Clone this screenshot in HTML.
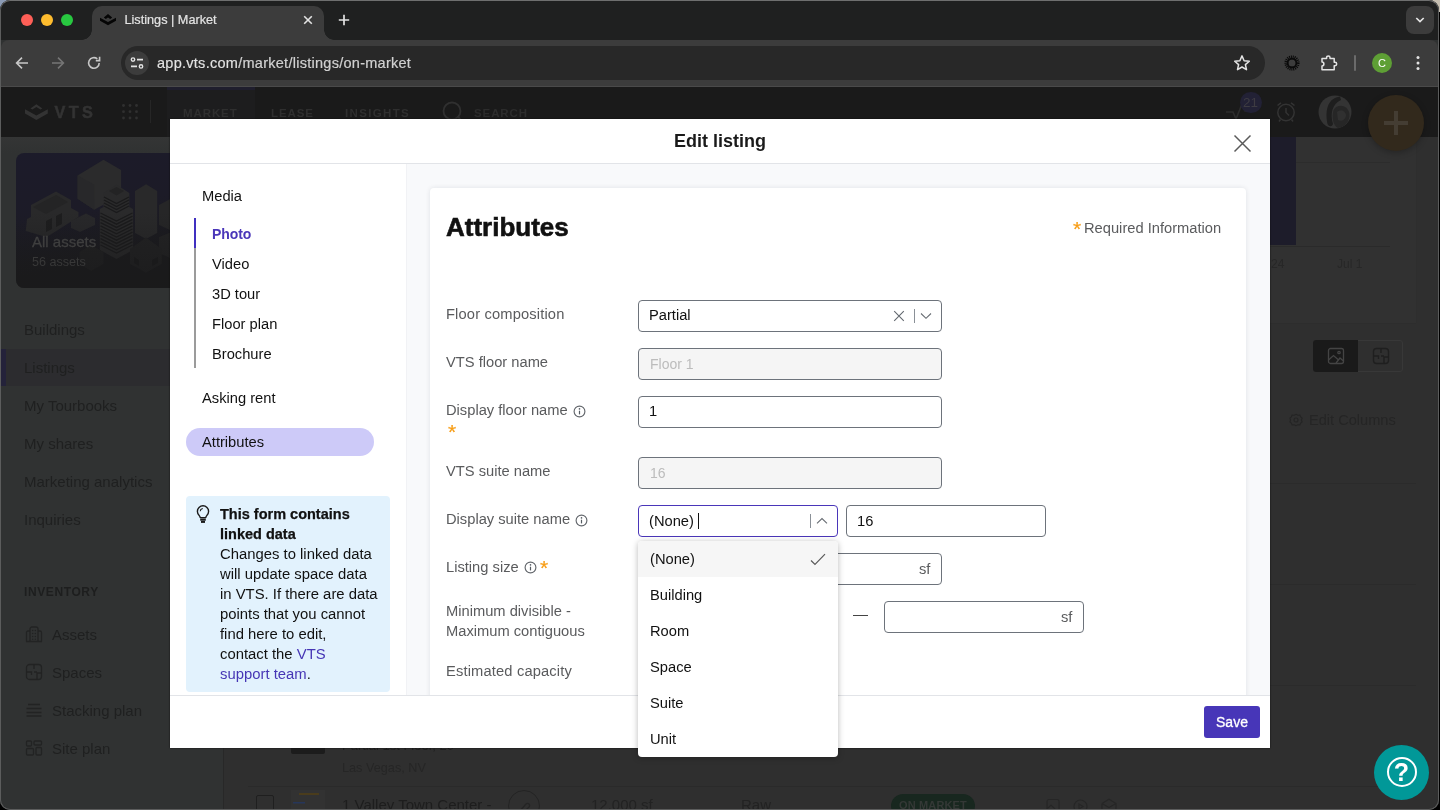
<!DOCTYPE html>
<html lang="en">
<head>
<meta charset="utf-8">
<title>Listings | Market</title>
<style>
*{box-sizing:border-box;margin:0;padding:0}
html,body{width:1440px;height:810px;overflow:hidden;background:#000}
body{font-family:"Liberation Sans",sans-serif;position:relative;color:#111}
.abs{position:absolute}
#win{will-change:transform;position:absolute;left:0;top:0;width:1439px;height:810px;border-radius:10px;overflow:hidden;background:#2f3131}
#winborder{position:absolute;left:0;top:0;width:1439px;height:810px;border-radius:10px;border:1px solid #5c5d5d;border-top-color:#6e6f6f;z-index:100;pointer-events:none}
/* ---------- browser chrome ---------- */
#tabbar{position:absolute;left:0;top:0;width:1440px;height:40px;background:#1f2020}
#toolbar{position:absolute;left:1px;top:40px;width:1437px;height:46px;background:#3c3c3c;border-radius:8px 8px 0 0}
#toolline{position:absolute;left:0;top:86px;width:1440px;height:1px;background:#4a4a4a}
.light{position:absolute;top:14px;width:12px;height:12px;border-radius:50%}
#tab{position:absolute;left:92px;top:6px;width:232px;height:34px;background:#3c3c3c;border-radius:10px 10px 0 0}
#tab:before,#tab:after{content:"";position:absolute;bottom:0;width:10px;height:10px;background:radial-gradient(circle at 0 0,transparent 9.5px,#3c3c3c 10px)}
#tab:before{left:-10px}
#tab:after{right:-10px;background:radial-gradient(circle at 100% 0,transparent 9.5px,#3c3c3c 10px)}
#tabtitle{position:absolute;left:124.5px;top:13px;font-size:12.7px;-webkit-text-stroke:.2px #e3e3e3;color:#e3e3e3;white-space:nowrap}
#urlpill{position:absolute;left:121px;top:46px;width:1144px;height:34px;border-radius:17px;background:#282828}
#urlchip{position:absolute;left:125px;top:51px;width:24px;height:24px;border-radius:12px;background:#3c3c3c}
#url{position:absolute;left:157px;top:55px;-webkit-text-stroke:.15px #e3e3e3;font-size:14.5px;letter-spacing:.27px;color:#e3e3e3;white-space:nowrap}
/* ---------- app (dimmed) ---------- */
#apphead{position:absolute;left:0;top:87px;width:1440px;height:50px;background:#1a1a1a}
#side{position:absolute;left:0;top:137px;width:224px;border-right:1px solid #282828;height:673px;background:#303232}
#main{position:absolute;left:224px;top:137px;width:1217px;height:673px;background:#2f2f2f}
.navi{position:absolute;left:24px;font-size:15px;color:#1f2020;white-space:nowrap}
.hd{font-size:11.5px;font-weight:bold;letter-spacing:.9px;color:#2f2f2f;white-space:nowrap}
.sm{font-size:12px;color:#272727;white-space:nowrap}
/* ---------- modal ---------- */
#modal{position:absolute;left:170px;top:119px;width:1100px;height:629px;background:#fff;overflow:hidden;box-shadow:0 0 1.5px #0e0e0e}
#mc{position:absolute;left:-170px;top:-119px;width:1440px;height:810px}
#mtitle{text-align:center;font-size:18px;font-weight:bold;color:#1a1a1a;white-space:nowrap}
.ln{font-size:14.7px;color:#111;white-space:nowrap;line-height:18px}
.ib{font-size:14.85px;line-height:20px;color:#111;white-space:nowrap}
#h1{font-size:26px;font-weight:bold;color:#111;white-space:nowrap;-webkit-text-stroke:.6px #111}
.lb{font-size:14.7px;color:#5a5b5d;white-space:nowrap;line-height:18px}
.val{font-size:14.7px;color:#111;white-space:nowrap;line-height:18px}
.inp{height:32px;border:1px solid #6d737b;border-radius:4px;background:#fff}
.dis{background:#f5f5f5}
.ast{font-size:21px;line-height:22px;color:#f79d16;-webkit-text-stroke:.2px #f79d16}
#save{width:56px;height:32px;border-radius:3px;background:#4736b8;color:#fff;font-size:14px;text-align:center;line-height:32px;-webkit-text-stroke:.3px #fff}
#dd{left:638px;top:541px;width:200px;height:216px;background:#fff;border-radius:4px;box-shadow:0 1px 6px rgba(0,0,0,.28);overflow:hidden;z-index:5}
.opt{height:36px;line-height:36px;padding-left:12px;font-size:14.7px;color:#111}
</style>
</head>
<body>
<div class="abs" style="left:0;top:0;width:12px;height:12px;background:#8b9bb5"></div>
<div class="abs" style="left:1428px;top:0;width:12px;height:12px;background:#c4bdb0"></div>
<div id="win">
  <!-- browser chrome -->
  <div id="tabbar"></div>
  <div id="toolbar"></div>
  <div id="toolline"></div>
  <div class="light" style="left:21px;background:#fe5f57"></div>
  <div class="light" style="left:41px;background:#febc2e"></div>
  <div class="light" style="left:61px;background:#28c840"></div>
  <div id="tab"></div>
  <svg class="abs" style="left:100px;top:13.8px" width="16" height="12" viewBox="0 0 16 12"><path d="M0 3.7 L8 8 L16 3.7 L16 6.8 L8 11.2 L0 6.8 Z" fill="#050505"/><path d="M3.8 3.5 L8 0 L12.2 3.5 L10.2 4.9 L8 3.4 L5.8 4.9 Z" fill="#050505"/></svg>
  <div id="tabtitle">Listings | Market</div>
  <svg class="abs" style="left:303px;top:15px" width="10" height="10" viewBox="0 0 10 10"><path d="M1.2 1.2 L8.8 8.8 M8.8 1.2 L1.2 8.8" stroke="#e3e3e3" stroke-width="1.6" fill="none"/></svg>
  <svg class="abs" style="left:338px;top:14px" width="12" height="12" viewBox="0 0 12 12"><path d="M6 0.8 V11.2 M0.8 6 H11.2" stroke="#e3e3e3" stroke-width="1.7" fill="none"/></svg>
  <div class="abs" style="left:1406px;top:6px;width:28px;height:28px;border-radius:8px;background:#3c3c3c"></div>
  <svg class="abs" style="left:1414px;top:15px" width="12" height="10" viewBox="0 0 12 10"><path d="M2.3 3 L6 6.6 L9.7 3" stroke="#e3e3e3" stroke-width="1.7" fill="none"/></svg>
  <!-- nav buttons -->
  <svg class="abs" style="left:14px;top:55px" width="16" height="16" viewBox="0 0 16 16"><path d="M14 8 H3 M8 2.6 L2.6 8 L8 13.4" stroke="#c7c7c7" stroke-width="1.6" fill="none"/></svg>
  <svg class="abs" style="left:50px;top:55px" width="16" height="16" viewBox="0 0 16 16"><path d="M2 8 H13 M8 2.6 L13.4 8 L8 13.4" stroke="#757575" stroke-width="1.6" fill="none"/></svg>
  <svg class="abs" style="left:86px;top:55px" width="16" height="16" viewBox="0 0 16 16"><path d="M13.2 8 A5.3 5.3 0 1 1 11.3 3.9" stroke="#c7c7c7" stroke-width="1.6" fill="none"/><path d="M13.6 1.8 V5.6 H9.8" stroke="#c7c7c7" stroke-width="1.6" fill="none"/></svg>
  <div id="urlpill"></div>
  <div id="urlchip"></div>
  <svg class="abs" style="left:129px;top:55px" width="16" height="16" viewBox="0 0 16 16"><circle cx="4" cy="4.6" r="1.7" stroke="#e3e3e3" stroke-width="1.4" fill="none"/><path d="M8 4.6 H14" stroke="#e3e3e3" stroke-width="1.6"/><circle cx="12" cy="11.4" r="1.7" stroke="#e3e3e3" stroke-width="1.4" fill="none"/><path d="M2 11.4 H8" stroke="#e3e3e3" stroke-width="1.6"/></svg>
  <div id="url">app.vts.com<span style="color:#d0d0d0">/market/listings/on-market</span></div>
  <svg class="abs" style="left:1233px;top:54px" width="18" height="18" viewBox="0 0 18 18"><path d="M9 1.9 L11.1 6.7 L16.3 7.2 L12.4 10.6 L13.5 15.7 L9 13 L4.5 15.7 L5.6 10.6 L1.7 7.2 L6.9 6.7 Z" stroke="#e3e3e3" stroke-width="1.5" fill="none" stroke-linejoin="round"/></svg>
  <svg class="abs" style="left:1283px;top:54px" width="18" height="18" viewBox="0 0 18 18"><circle cx="9" cy="9" r="5.6" stroke="#0a0a0a" stroke-width="4" stroke-dasharray="0.9 0.75" fill="none"/><circle cx="9" cy="9" r="4.4" stroke="#0a0a0a" stroke-width="1.6" fill="none"/></svg>
  <svg class="abs" style="left:1319px;top:53px" width="20" height="20" viewBox="0 0 20 20"><path d="M3 5.5 H7.6 V4.6 A1.7 1.7 0 0 1 11 4.6 V5.5 H15.2 V9.3 H16 A1.7 1.7 0 0 1 16 12.7 H15.2 V16.8 H3 V12.9 A1.9 1.9 0 0 0 3 9.1 Z" stroke="#e3e3e3" stroke-width="1.5" fill="none" stroke-linejoin="round"/></svg>
  <div class="abs" style="left:1354px;top:55px;width:2px;height:16px;background:#6b6b6b;border-radius:1px"></div>
  <div class="abs" style="left:1372px;top:53px;width:20px;height:20px;border-radius:10px;background:#5e9f35;color:#fff;font-size:11px;line-height:20px;text-align:center">C</div>
  <svg class="abs" style="left:1414px;top:54px" width="8" height="18" viewBox="0 0 8 18"><circle cx="4" cy="3.5" r="1.5" fill="#e3e3e3"/><circle cx="4" cy="9" r="1.5" fill="#e3e3e3"/><circle cx="4" cy="14.5" r="1.5" fill="#e3e3e3"/></svg>

  <!-- dimmed app -->
  <div id="apphead"></div>
  <div class="abs" style="left:167px;top:87px;width:88px;height:50px;background:#1d1d1e"></div>
  <div class="abs" style="left:167px;top:87px;width:88px;height:3px;background:#1f1e2d"></div>
  <svg class="abs" style="left:24px;top:103px" width="25" height="18" viewBox="0 0 25 18"><path d="M1 6.3 L12.4 12.6 L23.8 6.3 L23.8 10.4 L12.4 17 L1 10.4 Z" fill="#333"/><path d="M6.4 5.6 L12.4 1.2 L18.4 5.6 L16.4 6.6 L12.4 3.9 L8.4 6.6 Z" fill="#333"/></svg>
  <div class="abs hd" style="left:54.5px;top:103px;font-size:16.3px;letter-spacing:3.4px;color:#333;-webkit-text-stroke:.5px #333">VTS</div>
  <svg class="abs" style="left:121px;top:103px" width="18" height="18" viewBox="0 0 18 18" fill="#303030"><circle cx="2.5" cy="2.5" r="1.4"/><circle cx="9" cy="2.5" r="1.4"/><circle cx="15.5" cy="2.5" r="1.4"/><circle cx="2.5" cy="8.7" r="1.4"/><circle cx="9" cy="8.7" r="1.4"/><circle cx="15.5" cy="8.7" r="1.4"/><circle cx="2.5" cy="15" r="1.4"/><circle cx="9" cy="15" r="1.4"/><circle cx="15.5" cy="15" r="1.4"/></svg>
  <div class="abs" style="left:150px;top:100px;width:1px;height:23px;background:#262626"></div>
  <div class="abs hd" style="left:183px;top:107px">MARKET</div>
  <div class="abs hd" style="left:271px;top:107px">LEASE</div>
  <div class="abs hd" style="left:345px;top:107px;letter-spacing:1.35px">INSIGHTS</div>
  <svg class="abs" style="left:441px;top:100px" width="24" height="24" viewBox="0 0 24 24"><circle cx="11" cy="11" r="8.5" stroke="#303030" stroke-width="1.8" fill="none"/><path d="M17 17 L21 21" stroke="#303030" stroke-width="1.8"/></svg>
  <div class="abs hd" style="left:474px;top:107px;color:#2c2c2c">SEARCH</div>
  <!-- header right -->
  <svg class="abs" style="left:1224px;top:100px" width="30" height="24" viewBox="0 0 30 24"><path d="M2 12 H9 L12 19 L18 4 L21 11 H27" stroke="#2d2d2d" stroke-width="1.6" fill="none"/></svg>
  <div class="abs" style="left:1239.5px;top:91.5px;width:22px;height:21px;border-radius:11px;background:#222135;color:#3d3b42;font-size:13.5px;line-height:21px;text-align:center">21</div>
  <svg class="abs" style="left:1274px;top:100px" width="24" height="24" viewBox="0 0 24 24" fill="none" stroke="#333" stroke-width="1.5"><circle cx="12" cy="12.5" r="8.2"/><path d="M12 8 V12.5 L15 15.5 M3.5 5.5 L7 2.8 M20.5 5.5 L17 2.8 M6.5 19.5 L5 21.5 M17.5 19.5 L19 21.5"/></svg>
  <svg class="abs" style="left:1318px;top:95px" width="34" height="34" viewBox="0 0 34 34"><defs><clipPath id="avc"><circle cx="17" cy="17" r="16.5"/></clipPath></defs><circle cx="17" cy="17" r="16.5" fill="#343434"/><g clip-path="url(#avc)"><path d="M22 1.5 C11 3 6.5 13 9.5 29 C11 32 14 32 15 29 C12 19 14 9 23 5 Z" fill="#1e1e1e"/><path d="M15.5 15 C20 8 30 10 31.5 19 C32 26 27 32 20 33 C15 31 13.5 22 15.5 15 Z" fill="#262626"/><path d="M19 17 C23 14 28 16 28 21 C27 25 23 27 20 25 Z" fill="#303030"/></g></svg>
  <div class="abs" style="left:1368px;top:95px;width:56px;height:56px;border-radius:28px;background:#32291c;z-index:3;box-shadow:0 2px 6px rgba(0,0,0,.25)"></div>
  <div class="abs" style="left:1384px;top:121px;width:24px;height:4px;background:#443d33;z-index:3"></div>
  <div class="abs" style="left:1394px;top:111px;width:4px;height:24px;background:#443d33;z-index:3"></div>

  <div id="side"></div>
  <div id="main"></div>
  <!-- sidebar content -->
  <div class="abs" style="left:0;top:137px;width:222px;height:16px;background:linear-gradient(#343535,#303232)"></div>
  <div class="abs" style="left:16px;top:153px;width:190px;height:135px;border-radius:8px;background:linear-gradient(170deg,#1c1b2a 0%,#1c1b27 40%,#1a1a1c 75%,#1a1a1a 100%);overflow:hidden">
    <svg class="abs" style="left:0;top:0" width="190" height="135" viewBox="0 0 190 135">
      <!-- big cube -->
      <path d="M61.6 22.6 L87.5 6.8 L105.1 17 L105.1 42 L78.3 56.8 L61.6 45.7 Z" fill="#2b2b2c"/>
      <path d="M61.6 22.6 L78.3 31.8 L78.3 56.8 L61.6 45.7 Z" fill="#28282a"/>
      <!-- slim tower -->
      <path d="M119 38 L130.1 31.3 L141.2 38 L141.2 80 L130.1 86 L119 80 Z" fill="#29292a"/>
      <!-- right partial cube -->
      <path d="M143 52 L156 45 L170 52 L170 72 L156 78 L143 72 Z" fill="#262627"/>
      <path d="M143 84 L158 78 L170 84 L170 100 L156 106 L143 100 Z" fill="#232324"/>
      <!-- factory -->
      <path d="M15 52 L40 38.5 L55 47 L55 55 L62.5 59 L62.5 64 L34 82 L30 84 L9.7 78 L11 66 L15 64 Z" fill="#29292a"/>
      <path d="M17 54 L40 42 L52 49 L30 61 Z" fill="#242425"/>
      <path d="M30 68 L36 65 L36 76 L30 79 Z M40 63 L46 60 L46 71 L40 74 Z" fill="#1d1d1e"/>
      <!-- cabin -->
      <path d="M55 68 L70 60.5 L79 65 L79 72 L64 79 L55 75 Z" fill="#28282a"/>
      <!-- striped tower -->
      <path d="M87.5 40 L100.5 31.8 L113.4 40 L113.4 54 L117.1 56 L117.1 97 L100.5 106 L83.8 97 L83.8 56 L87.5 54 Z" fill="#2a2a2b"/>
      <path d="M93 38 L100.5 34 L108 38 L100.5 42.5 Z" fill="#232324"/>
      <g stroke="#1a1a1b" stroke-width="1.3" fill="none">
        <path d="M88 44 L100.5 50.5 L113 44 M88 47 L100.5 53.5 L113 47 M88 50 L100.5 56.5 L113 50 M88 53 L100.5 59.5 L113 53"/>
        <path d="M84.5 60 L100.5 68 L116.5 60 M84.5 63.2 L100.5 71.2 L116.5 63.2 M84.5 66.4 L100.5 74.4 L116.5 66.4 M84.5 69.6 L100.5 77.6 L116.5 69.6 M84.5 72.8 L100.5 80.8 L116.5 72.8 M84.5 76 L100.5 84 L116.5 76 M84.5 79.2 L100.5 87.2 L116.5 79.2 M84.5 82.4 L100.5 90.4 L116.5 82.4 M84.5 85.6 L100.5 93.6 L116.5 85.6 M84.5 88.8 L100.5 96.8 L116.5 88.8 M84.5 92 L100.5 100 L116.5 92"/>
      </g>
      <!-- bottom cube & house -->
      <path d="M63.4 99 L75 92 L87.5 99 L87.5 111 L75 118 L63.4 111 Z" fill="#212122"/>
      <path d="M114 96 L130 84.6 L145.8 96 L145.8 111 L130 119.8 L114 111 Z" fill="#222223"/>
      <path d="M118 104 L123 107 L123 113 L118 110 Z M136 107 L142 104 L142 110 L136 113 Z" fill="#1a1a1b"/>
    </svg>
    <div class="abs" style="left:0;top:60px;width:190px;height:75px;background:linear-gradient(rgba(26,26,28,0),rgba(26,26,27,.75))"></div>
  </div>
  <div class="abs" style="left:32px;top:233px;font-size:15px;color:#3f3f3f;white-space:nowrap;-webkit-text-stroke:.3px #3f3f3f">All assets</div>
  <div class="abs" style="left:32px;top:254.5px;font-size:12.6px;color:#383838;white-space:nowrap">56 assets</div>
  <div class="abs" style="left:0;top:349px;width:222px;height:37px;background:#2c2c2f"></div>
  <div class="abs" style="left:0;top:349px;width:6px;height:37px;background:#24223a"></div>
  <div class="navi" style="top:321px">Buildings</div>
  <div class="navi" style="top:359px">Listings</div>
  <div class="navi" style="top:397px">My Tourbooks</div>
  <div class="navi" style="top:435px">My shares</div>
  <div class="navi" style="top:473px">Marketing analytics</div>
  <div class="navi" style="top:511px">Inquiries</div>
  <div class="abs" style="left:24px;top:585px;font-size:12px;font-weight:bold;letter-spacing:.6px;color:#1d1e1e">INVENTORY</div>
  <svg class="abs" style="left:25px;top:625px" width="18" height="18" viewBox="0 0 18 18" fill="none" stroke="#222323" stroke-width="1.3"><path d="M5 16.5 V4 a2 2 0 0 1 2 -2 h4 a2 2 0 0 1 2 2 V16.5"/><path d="M5 6 H3 a1.5 1.5 0 0 0 -1.5 1.5 V16.5 M13 6 H15 a1.5 1.5 0 0 1 1.5 1.5 V16.5 M1 16.5 H17"/><g fill="#222323" stroke="none"><circle cx="7.7" cy="5.6" r=".75"/><circle cx="10.3" cy="5.6" r=".75"/><circle cx="7.7" cy="8.5" r=".75"/><circle cx="10.3" cy="8.5" r=".75"/><circle cx="7.7" cy="11.4" r=".75"/><circle cx="10.3" cy="11.4" r=".75"/><circle cx="7.7" cy="14.2" r=".75"/><circle cx="10.3" cy="14.2" r=".75"/></g></svg>
  <svg class="abs" style="left:25px;top:663px" width="18" height="18" viewBox="0 0 18 18" fill="none" stroke="#222323" stroke-width="1.3"><rect x="1.5" y="1.5" width="15" height="15" rx="3"/><path d="M9 1.5 V6 M1.5 9 H6.5 V12 M12 16.5 V10 H16.5 M9 9 H12"/></svg>
  <svg class="abs" style="left:25px;top:701px" width="18" height="18" viewBox="0 0 18 18" fill="none" stroke="#222323" stroke-width="1.3"><path d="M3 3.5 H15 M1.5 7.5 H16.5 M1.5 11.5 H16.5 M1.5 15 H16.5"/></svg>
  <svg class="abs" style="left:25px;top:739px" width="18" height="18" viewBox="0 0 18 18" fill="none" stroke="#222323" stroke-width="1.3"><rect x="1.5" y="2" width="5" height="5" rx="1"/><rect x="9" y="2" width="7.5" height="4" rx="1"/><rect x="1.5" y="9.5" width="7" height="6.5" rx="1"/><rect x="11" y="8.5" width="5.5" height="7.5" rx="1"/></svg>
  <div class="navi" style="left:52px;top:626px">Assets</div>
  <div class="navi" style="left:52px;top:664px">Spaces</div>
  <div class="navi" style="left:52px;top:702px">Stacking plan</div>
  <div class="navi" style="left:52px;top:740px">Site plan</div>
  <!-- main content behind modal -->
  <div class="abs" style="left:1270px;top:137px;width:146px;height:186px;background:#313131"></div>
  <div class="abs" style="left:1270px;top:137px;width:26px;height:108px;background:#1d1c2a"></div>
  <div class="abs" style="left:1270px;top:246px;width:120px;height:1px;background:#2a2a2a"></div>
  <div class="abs" style="left:1270px;top:323px;width:146px;height:1px;background:#2d2d2d"></div>
  <div class="abs" style="left:1416px;top:137px;width:1px;height:186px;background:#2e2e2e"></div>
  <div class="abs" style="left:1296px;top:162px;width:94px;height:1px;background:#2c2c2c"></div>
  <div class="abs sm" style="left:1271px;top:257px">24</div>
  <div class="abs sm" style="left:1337px;top:257px">Jul 1</div>
  <div class="abs" style="left:1313px;top:340px;width:90px;height:32px;border-radius:3px;border:1px solid #383838"></div>
  <div class="abs" style="left:1313px;top:340px;width:45px;height:32px;border-radius:3px 0 0 3px;background:#1a1a1a"></div>
  <svg class="abs" style="left:1327px;top:347px" width="18" height="18" viewBox="0 0 18 18" fill="none" stroke="#444" stroke-width="1.3"><rect x="1.5" y="1.5" width="15" height="15" rx="2"/><path d="M1.5 13 L6.5 8.5 L11 12.5 M9 16 L13 11 L16.5 14"/><circle cx="12" cy="5.5" r="1.2"/></svg>
  <svg class="abs" style="left:1372px;top:347px" width="18" height="18" viewBox="0 0 18 18" fill="none" stroke="#1f1f1f" stroke-width="1.4"><rect x="1.5" y="1.5" width="15" height="15" rx="3"/><path d="M9 1.5 V6 M1.5 9 H6.5 V12 M12 16.5 V10 H16.5 M9 9 H12"/></svg>
  <svg class="abs" style="left:1289px;top:413px" width="14" height="14" viewBox="0 0 16 16" fill="none" stroke="#242424" stroke-width="1.3"><circle cx="8" cy="8" r="2.3"/><path d="M8 1.5 L10 2.6 L12.4 2.4 L13.4 4.6 L15 6 L14.2 8 L15 10 L13.4 11.4 L12.4 13.6 L10 13.4 L8 14.5 L6 13.4 L3.6 13.6 L2.6 11.4 L1 10 L1.8 8 L1 6 L2.6 4.6 L3.6 2.4 L6 2.6 Z"/></svg>
  <div class="abs" style="left:1309px;top:412px;font-size:14.6px;color:#252525;white-space:nowrap">Edit Columns</div>
  <!-- rows below modal -->
  <div class="abs" style="left:291px;top:740px;width:34px;height:14px;background:#1c1c1c;border-radius:2px"></div>
  <div class="abs" style="left:342px;top:738px;font-size:13px;color:#1e1e1e;white-space:nowrap">Partial 1st Floor, 20</div>
  <div class="abs" style="left:342px;top:761px;font-size:12.7px;color:#262626;white-space:nowrap">Las Vegas, NV</div>
  <div class="abs" style="left:248px;top:786px;width:1168px;height:1px;background:#2a2a2a"></div>
  <div class="abs" style="left:1270px;top:483px;width:146px;height:1px;background:#2b2b2b"></div>
  <div class="abs" style="left:1270px;top:584px;width:146px;height:1px;background:#2b2b2b"></div>
  <div class="abs" style="left:1270px;top:685px;width:146px;height:1px;background:#2b2b2b"></div>
  <div class="abs" style="left:256px;top:795px;width:18px;height:18px;border:1px solid #1f1f1f;border-radius:2px"></div>
  <div class="abs" style="left:291px;top:790px;width:34px;height:20px;background:#323232;background-image:linear-gradient(#4a3c1c,#4a3c1c),linear-gradient(#26365a,#26365a);background-size:20px 2px,12px 1.5px;background-position:8px 3px,2px 12px;background-repeat:no-repeat"></div>
  <div class="abs" style="left:342px;top:796px;font-size:15px;color:#1d1d1d;white-space:nowrap">1 Valley Town Center -</div>
  <div class="abs" style="left:508px;top:790px;width:32px;height:32px;border-radius:16px;border:1px solid #242424"></div>
  <svg class="abs" style="left:517px;top:800px" width="14" height="10" viewBox="0 0 14 10"><path d="M2 12 L9 4 A2 2 0 0 1 12 7 L8 11" stroke="#242424" stroke-width="1.3" fill="none"/></svg>
  <div class="abs" style="left:591px;top:796px;font-size:15px;color:#222;white-space:nowrap">12,000 sf</div>
  <div class="abs" style="left:741px;top:796px;font-size:15px;color:#222;white-space:nowrap">Raw</div>
  <div class="abs" style="left:891px;top:794px;width:84px;height:24px;border-radius:12px;background:#18271f;color:#343836;font-size:11px;font-weight:bold;letter-spacing:.15px;line-height:22px;text-align:center">ON MARKET</div>
  <svg class="abs" style="left:1046px;top:798px" width="72" height="12" viewBox="0 0 72 12" fill="none" stroke="#262626" stroke-width="1.2"><rect x="1" y="1.5" width="12" height="12" rx="2"/><path d="M1 11 L5 7 L9 11"/><circle cx="34.5" cy="8.5" r="6.5"/><path d="M33 6 L37 8.5 L33 11 Z"/><path d="M56 5.5 L63 1.2 L70 5.5 V12 M56 5.5 V12 M56 5.5 L63 9.5 L70 5.5"/></svg>
  <!-- help button -->
  <div class="abs" style="left:1374px;top:744.5px;width:55.4px;height:55.4px;border-radius:28px;background:#019898;z-index:3"></div>
  <div class="abs" style="left:1386.5px;top:757px;width:30px;height:30px;border-radius:15px;border:2px solid #fff;z-index:3"></div>
  <div class="abs" style="left:1386.5px;top:757px;width:30px;height:30px;z-index:3;color:#fff;font-size:25px;font-weight:bold;line-height:30px;text-align:center">?</div>

  <!-- modal -->
  <div id="modal"><div id="mc">
    <div class="abs" style="left:170px;top:119px;width:1100px;height:44px;background:#fff"></div>
    <div class="abs" style="left:170px;top:163px;width:1100px;height:1px;background:#e2e4e8"></div>
    <div class="abs" id="mtitle" style="left:170px;top:131px;width:1100px">Edit listing</div>
    <svg class="abs" style="left:1233px;top:134.3px" width="19" height="19" viewBox="0 0 19 19"><path d="M1.5 1.5 L17.5 17.5 M17.5 1.5 L1.5 17.5" stroke="#5a5a5a" stroke-width="1.5" fill="none"/></svg>
    <!-- left nav -->
    <div class="abs" style="left:170px;top:164px;width:236px;height:531px;background:#fff"></div>
    <div class="abs" style="left:406px;top:164px;width:864px;height:531px;background:#f8f9fb"></div>
    <div class="abs" style="left:406px;top:164px;width:1px;height:531px;background:#f1f2f5"></div>
    <div class="abs ln" style="left:202px;top:187px">Media</div>
    <div class="abs" style="left:194px;top:218px;width:2px;height:150px;background:#9b9b9b"></div>
    <div class="abs" style="left:194px;top:218px;width:2px;height:30px;background:#4030c0"></div>
    <div class="abs ln" style="left:212px;top:225px;color:#4a36b9;font-weight:bold;font-size:14px;letter-spacing:-.1px">Photo</div>
    <div class="abs ln" style="left:212px;top:255px">Video</div>
    <div class="abs ln" style="left:212px;top:285px">3D tour</div>
    <div class="abs ln" style="left:212px;top:315px">Floor plan</div>
    <div class="abs ln" style="left:212px;top:345px">Brochure</div>
    <div class="abs ln" style="left:202px;top:389px">Asking rent</div>
    <div class="abs" style="left:186px;top:428px;width:188px;height:28px;border-radius:14px;background:#cdcaf8"></div>
    <div class="abs ln" style="left:202px;top:433px">Attributes</div>
    <!-- info box -->
    <div class="abs" style="left:186px;top:496px;width:204px;height:196px;border-radius:4px;background:#e2f2fd"></div>
    <svg class="abs" style="left:194px;top:504px" width="18" height="20" viewBox="0 0 18 20" fill="none" stroke="#1a1a1a" stroke-width="1.4"><path d="M6.2 13.6 C6.2 11.8 3.4 10.6 3.4 7.4 A5.6 5.6 0 0 1 14.6 7.4 C14.6 10.6 11.8 11.8 11.8 13.6 Z" stroke-linejoin="round"/><path d="M6.2 15.6 H11.8" stroke-width="2.2"/><path d="M7 17.9 H11" stroke-width="2"/><path d="M6.2 7.2 A2.9 2.9 0 0 1 8.8 4.5" stroke-width="1.1"/></svg>
    <div class="abs ib" style="left:220px;top:504px"><b style="font-size:14.5px;-webkit-text-stroke:.25px #111">This form contains<br>linked data</b><br>Changes to linked data<br>will update space data<br>in VTS. If there are data<br>points that you cannot<br>find here to edit,<br>contact the <span style="color:#4636b5">VTS<br>support team</span>.</div>
    <!-- card -->
    <div class="abs" style="left:430px;top:188px;width:816px;height:520px;border-radius:4px;background:#fff;box-shadow:0 0 5px rgba(20,30,50,.10)"></div>
    <div class="abs" id="h1" style="left:446px;top:212px">Attributes</div>
    <div class="abs ast" style="left:1073px;top:218px">*</div>
    <div class="abs lb" style="left:1084px;top:219px">Required Information</div>
    <!-- rows -->
    <div class="abs lb" style="left:446px;top:305px;letter-spacing:.15px">Floor composition</div>
    <div class="abs inp" style="left:638px;top:300px;width:304px"></div>
    <div class="abs val" style="left:649px;top:306px">Partial</div>
    <svg class="abs" style="left:892.7px;top:310px" width="12" height="12" viewBox="0 0 12 12"><path d="M1.2 1.2 L10.8 10.8 M10.8 1.2 L1.2 10.8" stroke="#62686f" stroke-width="1.1" fill="none"/></svg>
    <div class="abs" style="left:914px;top:309px;width:1px;height:14px;background:#8a9097"></div>
    <svg class="abs" style="left:920px;top:311px" width="12" height="10" viewBox="0 0 12 10"><path d="M1 2.5 L6 7.3 L11 2.5" stroke="#666b71" stroke-width="1.05" fill="none"/></svg>

    <div class="abs lb" style="left:446px;top:353px">VTS floor name</div>
    <div class="abs inp dis" style="left:638px;top:348px;width:304px"></div>
    <div class="abs val" style="left:650px;top:355px;color:#bcbcbc;font-size:14px">Floor 1</div>

    <div class="abs lb" style="left:446px;top:401px">Display floor name</div>
    <svg class="abs ii" style="left:573px;top:404.5px" width="13" height="13" viewBox="0 0 13 13"><circle cx="6.5" cy="6.5" r="5.4" stroke="#62666b" stroke-width="1.15" fill="none"/><path d="M6.5 5.7 V9.4" stroke="#555b62" stroke-width="1.2"/><circle cx="6.5" cy="3.9" r=".8" fill="#555b62"/></svg>
    <div class="abs ast" style="left:448px;top:420.5px">*</div>
    <div class="abs inp" style="left:638px;top:396px;width:304px"></div>
    <div class="abs val" style="left:649px;top:402px">1</div>

    <div class="abs lb" style="left:446px;top:462px">VTS suite name</div>
    <div class="abs inp dis" style="left:638px;top:457px;width:304px"></div>
    <div class="abs val" style="left:650px;top:464px;color:#bcbcbc;font-size:14px">16</div>

    <div class="abs lb" style="left:446px;top:510px">Display suite name</div>
    <svg class="abs ii" style="left:574.7px;top:513.5px" width="13" height="13" viewBox="0 0 13 13"><circle cx="6.5" cy="6.5" r="5.4" stroke="#62666b" stroke-width="1.15" fill="none"/><path d="M6.5 5.7 V9.4" stroke="#555b62" stroke-width="1.2"/><circle cx="6.5" cy="3.9" r=".8" fill="#555b62"/></svg>
    <div class="abs inp" style="left:638px;top:505px;width:200px;border:1.5px solid #4a36b9"></div>
    <div class="abs val" style="left:649px;top:512px">(None)</div>
    <div class="abs" style="left:698px;top:513px;width:1px;height:16px;background:#111"></div>
    <div class="abs" style="left:810px;top:514px;width:1px;height:14px;background:#8a9097"></div>
    <svg class="abs" style="left:816px;top:516px" width="12" height="10" viewBox="0 0 12 10"><path d="M1 7.3 L6 2.5 L11 7.3" stroke="#666b71" stroke-width="1.05" fill="none"/></svg>
    <div class="abs inp" style="left:846px;top:505px;width:200px"></div>
    <div class="abs val" style="left:857px;top:512px">16</div>

    <div class="abs lb" style="left:446px;top:558px">Listing size</div>
    <svg class="abs ii" style="left:524.3px;top:561.4px" width="13" height="13" viewBox="0 0 13 13"><circle cx="6.5" cy="6.5" r="5.4" stroke="#62666b" stroke-width="1.15" fill="none"/><path d="M6.5 5.7 V9.4" stroke="#555b62" stroke-width="1.2"/><circle cx="6.5" cy="3.9" r=".8" fill="#555b62"/></svg>
    <div class="abs ast" style="left:540px;top:557px">*</div>
    <div class="abs inp" style="left:638px;top:553px;width:304px"></div>
    <div class="abs lb" style="left:919px;top:560px">sf</div>

    <div class="abs lb" style="left:446px;top:601px;line-height:20px">Minimum divisible -<br>Maximum contiguous</div>
    <div class="abs inp" style="left:638px;top:601px;width:200px"></div>
    <div class="abs" style="left:853px;top:615px;width:15px;height:1px;background:#444"></div>
    <div class="abs inp" style="left:884px;top:601px;width:200px"></div>
    <div class="abs lb" style="left:1061px;top:608px">sf</div>

    <div class="abs lb" style="left:446px;top:662px;letter-spacing:.15px">Estimated capacity</div>
    <!-- footer -->
    <div class="abs" style="left:170px;top:695px;width:1100px;height:53px;background:#fff"></div>
    <div class="abs" style="left:170px;top:695px;width:1100px;height:1px;background:#e2e4e8"></div>
    <div class="abs" id="save" style="left:1204px;top:706px">Save</div>
  </div></div>
  <!-- dropdown -->
  <div class="abs" id="dd">
    <div class="opt" style="background:#f6f6f6">(None)</div>
    <div class="opt">Building</div>
    <div class="opt">Room</div>
    <div class="opt">Space</div>
    <div class="opt">Suite</div>
    <div class="opt">Unit</div>
    <svg class="abs" style="left:172px;top:12px" width="16" height="13" viewBox="0 0 16 13"><path d="M1 7.5 L5 11.5 L15 1.2" stroke="#5a5a5a" stroke-width="1.2" fill="none"/></svg>
  </div>
</div>
<div id="winborder"></div>
</body>
</html>
